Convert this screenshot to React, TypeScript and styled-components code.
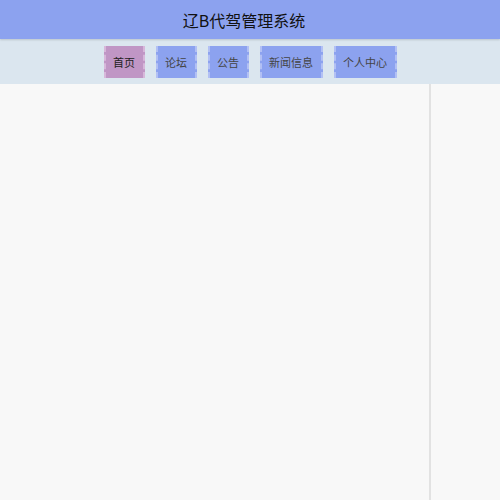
import React from "react";
import styled, { createGlobalStyle } from "styled-components";

const Global = createGlobalStyle`
  html, body { margin: 0; padding: 0; height: 100%; }
  body { font-family: "Noto Sans CJK SC", "Noto Sans", sans-serif; background: #f8f8f8; }
  #root { height: 100%; }
`;

const Page = styled.div`
  display: flex;
  flex-direction: column;
  height: 100vh;
`;

const Header = styled.header`
  height: 39px;
  background: #8ca2ef;
  display: flex;
  align-items: center;
  justify-content: center;
  color: #111;
  box-shadow: 0 1px 2px rgba(0,0,0,0.15);
  position: relative;
  z-index: 1;
`;

const Title = styled.h1`
  margin: 0 12px 0 0;
  font-size: 16px;
  font-weight: 400;
`;

const Nav = styled.nav`
  height: 45px;
  background: #dbe6ef;
  display: flex;
  align-items: center;
  justify-content: center;
  gap: 11px;
`;

const NavItem = styled.div<{ $active?: boolean }>`
  height: 32px;
  padding: 0 7.5px;
  display: flex;
  align-items: center;
  font-size: 11px;
  color: ${(p) => (p.$active ? "#222" : "#444")};
  background: ${(p) => (p.$active ? "#c096c5" : "#8ca2ef")};
  border-left: 2px dashed ${(p) => (p.$active ? "#d7b7da" : "#b2c0f4")};
  border-right: 2px dashed ${(p) => (p.$active ? "#d7b7da" : "#b2c0f4")};
  box-sizing: border-box;
`;

const Body = styled.main`
  flex: 1;
  display: flex;
  background: #f8f8f8;
`;

const Content = styled.section`
  width: 429px;
  border-right: 2px solid #e2e2e2;
`;

const Side = styled.aside`
  flex: 1;
`;

const items = ["首页", "论坛", "公告", "新闻信息", "个人中心"];

export default function App() {
  return (
    <Page>
      <Global />
      <Header>
        <Title>辽B代驾管理系统</Title>
      </Header>
      <Nav>
        {items.map((t, i) => (
          <NavItem key={t} $active={i === 0}>
            {t}
          </NavItem>
        ))}
      </Nav>
      <Body>
        <Content />
        <Side />
      </Body>
    </Page>
  );
}
